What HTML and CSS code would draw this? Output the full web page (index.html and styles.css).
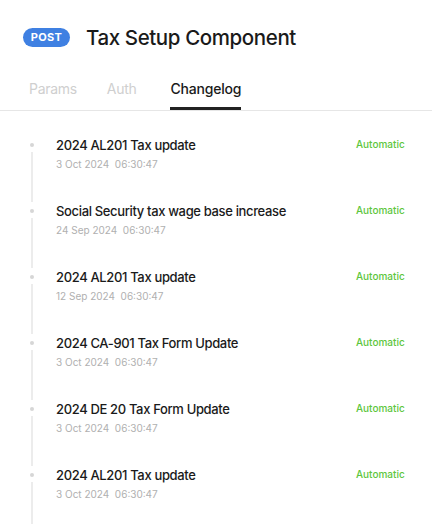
FILE: index.html
```html
<!DOCTYPE html>
<html lang="en">
<head>
    <meta charset="UTF-8">
    <meta name="viewport" content="width=device-width, initial-scale=1.0">
    <title>Tax Setup Component</title>
    <link rel="stylesheet" href="styles.css">
</head>
<body>
    <div class="header">
        <span class="badge">POST</span>
        <h1>Tax Setup Component</h1>
    </div>
    <div class="tabs">
        <span class="tab">Params</span>
        <span class="tab">Auth</span>
        <span class="tab active">Changelog</span>
    </div>
    <div class="timeline">
        <div class="item">
            <div class="track"><span class="dot"></span><span class="line"></span></div>
            <div class="content">
                <div class="title">2024 AL201 Tax update</div>
                <div class="date">3 Oct 2024&nbsp; 06:30:47</div>
            </div>
            <div class="status">Automatic</div>
        </div>
        <div class="item">
            <div class="track"><span class="dot"></span><span class="line"></span></div>
            <div class="content">
                <div class="title">Social Security tax wage base increase</div>
                <div class="date">24 Sep 2024&nbsp; 06:30:47</div>
            </div>
            <div class="status">Automatic</div>
        </div>
        <div class="item">
            <div class="track"><span class="dot"></span><span class="line"></span></div>
            <div class="content">
                <div class="title">2024 AL201 Tax update</div>
                <div class="date">12 Sep 2024&nbsp; 06:30:47</div>
            </div>
            <div class="status">Automatic</div>
        </div>
        <div class="item">
            <div class="track"><span class="dot"></span><span class="line"></span></div>
            <div class="content">
                <div class="title">2024 CA-901 Tax Form Update</div>
                <div class="date">3 Oct 2024&nbsp; 06:30:47</div>
            </div>
            <div class="status">Automatic</div>
        </div>
        <div class="item">
            <div class="track"><span class="dot"></span><span class="line"></span></div>
            <div class="content">
                <div class="title">2024 DE 20 Tax Form Update</div>
                <div class="date">3 Oct 2024&nbsp; 06:30:47</div>
            </div>
            <div class="status">Automatic</div>
        </div>
        <div class="item">
            <div class="track"><span class="dot"></span><span class="line"></span></div>
            <div class="content">
                <div class="title">2024 AL201 Tax update</div>
                <div class="date">3 Oct 2024&nbsp; 06:30:47</div>
            </div>
            <div class="status">Automatic</div>
        </div>
    </div>
</body>
</html>
```

FILE: styles.css
```css
body {
    font-family: Inter, "Liberation Sans", sans-serif;
    background-color: #fff;
    color: #1a1a1a;
    margin: 0;
    padding: 0;
}
.header {
    display: flex;
    align-items: center;
    gap: 16px;
    padding: 26px 0 0 23px;
    height: 22px;
}
.badge {
    background-color: #3f80e2;
    color: #fff;
    font-size: 11px;
    font-weight: 700;
    letter-spacing: 0.3px;
    border-radius: 10px;
    width: 47px;
    height: 19px;
    line-height: 19px;
    text-align: center;
}
h1 {
    font-size: 20.5px;
    font-weight: 500;
    margin: 0;
    letter-spacing: -0.4px;
}
.tabs {
    display: flex;
    gap: 30px;
    padding: 32px 0 0 29px;
    border-bottom: 1px solid #e6e6e6;
    height: 30px;
}
.tab {
    font-size: 14px;
    color: #cfcfcf;
    line-height: 18px;
    height: 27px;
    letter-spacing: -0.3px;
}
.tab.active {
    color: #1a1a1a;
    font-weight: 500;
    margin-left: 4px;
    letter-spacing: -0.2px;
    border-bottom: 3px solid #222;
}
.timeline {
    padding-top: 25px;
}
.item {
    display: flex;
    height: 66px;
}
.track {
    width: 56px;
    display: flex;
    flex-direction: column;
    align-items: flex-start;
}
.dot {
    width: 4px;
    height: 4px;
    border-radius: 50%;
    background-color: #d6d6d6;
    margin: 7px 0 0 30px;
}
.line {
    width: 2px;
    flex: 1;
    background-color: #ececec;
    margin: 5px 0 0 31px;
}
.content {
    flex: 1;
}
.title {
    font-size: 13px;
    font-weight: 500;
    line-height: 18px;
    letter-spacing: -0.35px;
}
.date {
    font-size: 10px;
    color: #b0b0b0;
    line-height: 14px;
    margin-top: 3px;
}
.status {
    font-size: 10px;
    color: #5cc63c;
    font-weight: 500;
    width: 76px;
    line-height: 14px;
    margin-top: 1px;
}
```
